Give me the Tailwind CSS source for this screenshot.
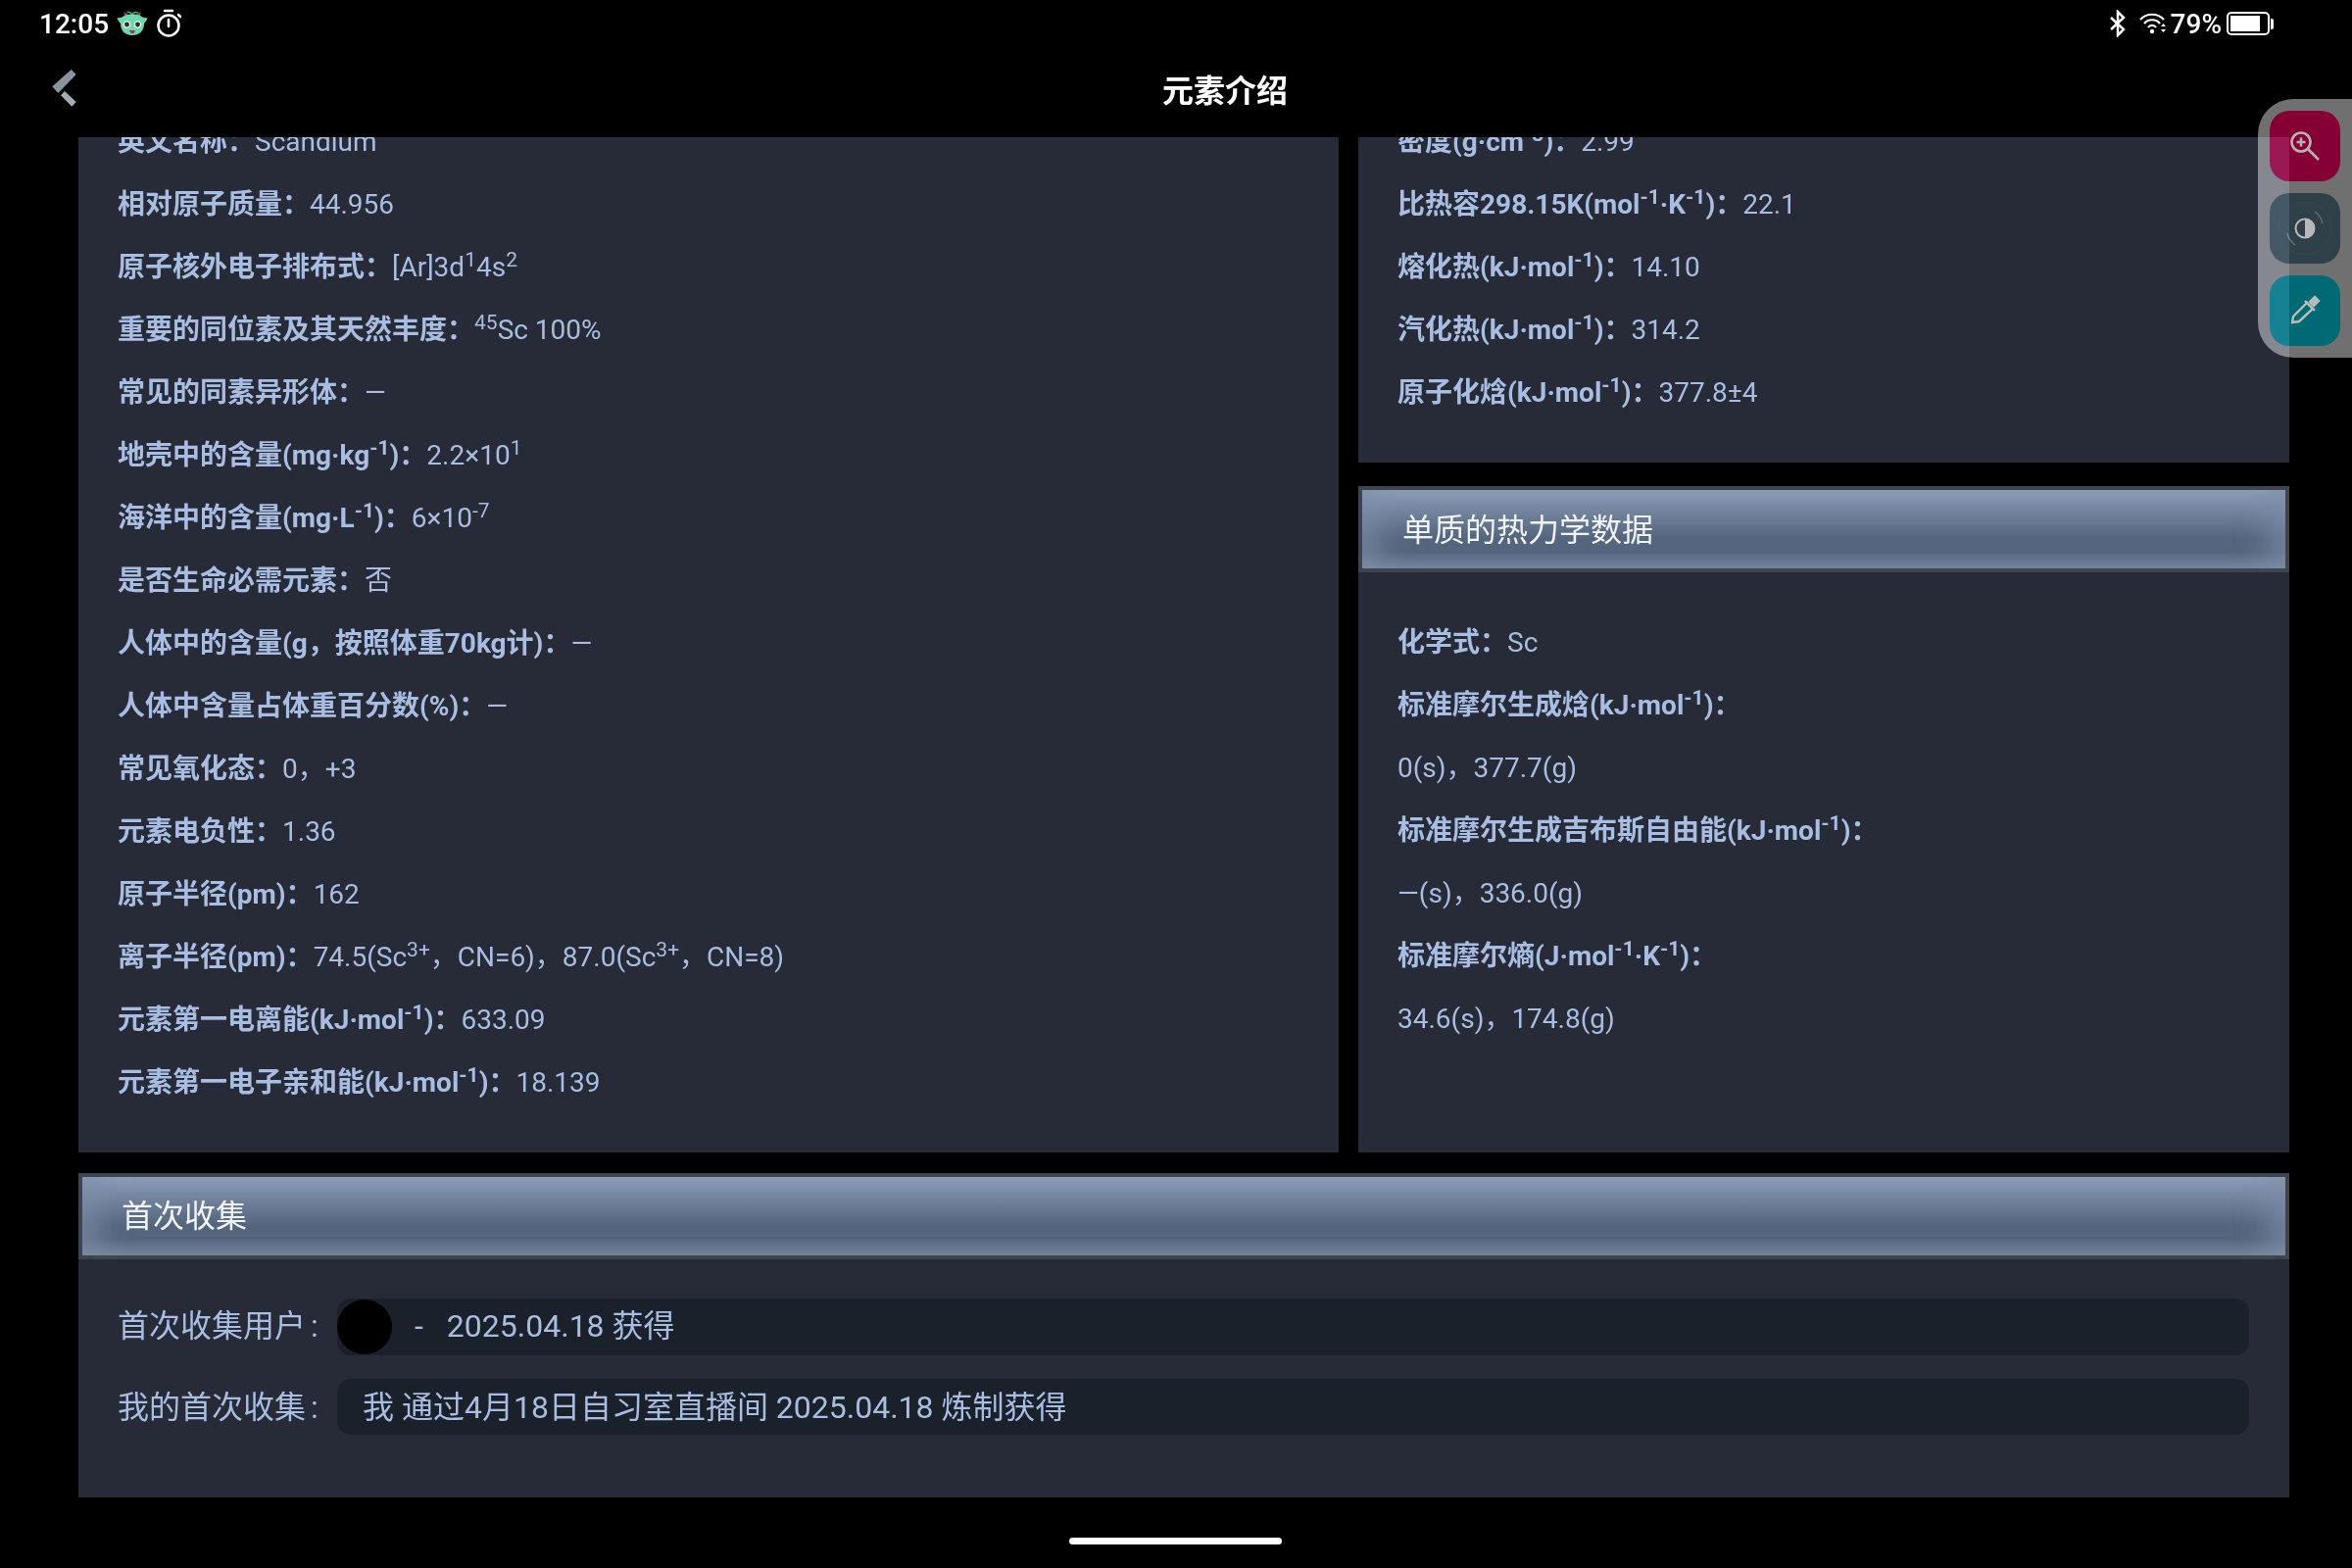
<!DOCTYPE html>
<html lang="zh">

<head>
  <meta charset="UTF-8">
  <title>元素介绍</title>
  <script src="https://cdn.jsdelivr.net/npm/@tailwindcss/browser@4"></script>
</head>

<body class="bg-black">
  <div class="relative w-[2400px] h-[1600px] overflow-hidden bg-black text-[#a9bde2] font-[family-name:Roboto,'Noto_Sans_CJK_SC',sans-serif]">

    <!-- status bar -->
    <div class="h-[48px] pl-[40px] pr-[80px] flex items-center justify-between text-white text-[28px]">
      <div class="flex items-center">
        <span class="font-medium pt-[2px]">12:05</span>
        <svg class="ml-[8px]" width="32" height="26" viewBox="0 0 32 26">
          <path d="M8 6 L7.5 1 L12 4 Z M24 6 L24.5 1 L20 4 Z" fill="#8a5a3a" />
          <path d="M16 4 C14 1 12 1 10.5 1.5 M16 4 C17 1 20 1 22 2" stroke="#4fae6e" stroke-width="1.5" fill="none" />
          <path d="M0.5 7 C4 8 6 6 8 5 C12 3 20 3 24 5 C26 6 28 8 31.5 7 C31 10 29 12 28 13 C28 20 24 25 16 25 C8 25 4 20 4 13 C3 12 1 10 0.5 7 Z" fill="#6fd6ae" />
          <circle cx="10.5" cy="14" r="3.8" fill="#e6f5ea" />
          <circle cx="21.5" cy="14" r="3.8" fill="#e6f5ea" />
          <circle cx="10.5" cy="14" r="2.4" fill="#20302a" />
          <circle cx="21.5" cy="14" r="2.4" fill="#20302a" />
          <path d="M13 20 H19 L17.5 23 H14.5 Z" fill="#b0304a" />
        </svg>
        <svg class="ml-[8px]" width="28" height="30" viewBox="0 0 28 30" fill="none" stroke="#fff" stroke-width="2.5">
          <circle cx="13" cy="17" r="10.5" />
          <path d="M9 2 H17 M13 11 V18 M23 6 L25 8" stroke-linecap="round" />
        </svg>
      </div>
      <div class="flex items-center">
        <svg width="18" height="28" viewBox="0 0 18 28" fill="none" stroke="#fff" stroke-width="2.5">
          <path d="M2 8 L15 20 L9 26 V2 L15 8 L2 20" />
        </svg>
        <svg class="ml-[13px]" width="28" height="24" viewBox="0 0 28 24" fill="none" stroke="#fff" stroke-width="2.2">
          <path d="M1 8 C7 1 19 1 25 8 M5 12 C9 7 17 7 21 12 M9 16 C11 13 15 13 17 16" />
          <circle cx="13" cy="20" r="2.2" fill="#fff" stroke="none" />
          <path d="M22 15 L24.5 12 L27 15 Z M22 18 L24.5 21 L27 18 Z" fill="#fff" stroke="none" />
        </svg>
        <span class="ml-[4px] font-medium pt-[2px]">79%</span>
        <div class="ml-[5px] flex items-center">
          <div class="w-[44px] h-[24px] rounded-[5px] border-2 border-white p-[2px]">
            <div class="w-[30px] h-full bg-white"></div>
          </div>
          <div class="w-[3px] h-[11px] bg-white rounded-r-[2px] ml-[1px]"></div>
        </div>
      </div>
    </div>

    <!-- nav bar -->
    <div class="relative h-[92px] flex items-center justify-center">
      <svg class="absolute left-[50px] top-[20px]" width="32" height="42" viewBox="50 68 32 42">
        <polygon points="72.7,71 77.7,76 59.3,95 53.3,88.3" fill="#8894a0" />
        <polygon points="66,93 77.7,104 73.3,108.7 62,97.3" fill="#a3abb4" />
      </svg>
      <h1 class="text-[32px] font-bold text-white ml-[100px] mb-[3px]">元素介绍</h1>
    </div>

    <!-- scrolled content, clipped at the nav bar -->
    <div class="h-[1036px] mx-[80px] w-[2256px] overflow-hidden flex flex-col justify-end">
      <div class="grid grid-cols-[1286px_950px] gap-x-[20px] shrink-0">
        <div class="bg-[#262b37] pl-[40px] pb-[39px] text-[28px] leading-[64px]">
          <p><b>英文名称：</b>Scandium</p>
          <p><b>相对原子质量：</b>44.956</p>
          <p><b>原子核外电子排布式：</b>[Ar]3d<sup>1</sup>4s<sup>2</sup></p>
          <p><b>重要的同位素及其天然丰度：</b><sup>45</sup>Sc 100%</p>
          <p><b>常见的同素异形体：</b>—</p>
          <p><b>地壳中的含量(mg·kg<sup>-1</sup>)：</b>2.2×10<sup>1</sup></p>
          <p><b>海洋中的含量(mg·L<sup>-1</sup>)：</b>6×10<sup>-7</sup></p>
          <p><b>是否生命必需元素：</b>否</p>
          <p><b>人体中的含量(g，按照体重70kg计)：</b>—</p>
          <p><b>人体中含量占体重百分数(%)：</b>—</p>
          <p><b>常见氧化态：</b>0，+3</p>
          <p><b>元素电负性：</b>1.36</p>
          <p><b>原子半径(pm)：</b>162</p>
          <p><b>离子半径(pm)：</b>74.5(Sc<sup>3+</sup>，CN=6)，87.0(Sc<sup>3+</sup>，CN=8)</p>
          <p><b>元素第一电离能(kJ·mol<sup>-1</sup>)：</b>633.09</p>
          <p><b>元素第一电子亲和能(kJ·mol<sup>-1</sup>)：</b>18.139</p>
        </div>

        <div class="flex flex-col gap-[24px] text-[28px] leading-[64px]">
          <div class="bg-[#262b37] pl-[40px] pb-[39px]">
            <p><b>密度(g·cm<sup>-3</sup>)：</b>2.99</p>
            <p><b>比热容298.15K(mol<sup>-1</sup>·K<sup>-1</sup>)：</b>22.1</p>
            <p><b>熔化热(kJ·mol<sup>-1</sup>)：</b>14.10</p>
            <p><b>汽化热(kJ·mol<sup>-1</sup>)：</b>314.2</p>
            <p><b>原子化焓(kJ·mol<sup>-1</sup>)：</b>377.8±4</p>
          </div>
          <div class="flex-1 bg-[#262b37]">
            <div class="h-[88px] border-4 border-[#3f454e] bg-[linear-gradient(180deg,#8f9fb8_0%,#6d7c96_35%,#56657e_62%,#56657e_78%,#75849c_100%)] shadow-[inset_36px_0_30px_-18px_#7f8fa8aa,inset_-36px_0_30px_-18px_#7f8fa8aa] pl-[41px] pt-[2px] flex items-center text-[32px] text-[#f0f3f8]">单质的热力学数据</div>
            <div class="pl-[40px] pt-[40px]">
              <p><b>化学式：</b>Sc</p>
              <p><b>标准摩尔生成焓(kJ·mol<sup>-1</sup>)：</b></p>
              <p>0(s)，377.7(g)</p>
              <p><b>标准摩尔生成吉布斯自由能(kJ·mol<sup>-1</sup>)：</b></p>
              <p>—(s)，336.0(g)</p>
              <p><b>标准摩尔熵(J·mol<sup>-1</sup>·K<sup>-1</sup>)：</b></p>
              <p>34.6(s)，174.8(g)</p>
            </div>
          </div>
        </div>
      </div>
    </div>

    <!-- first collection card -->
    <div class="mt-[21px] mx-[80px] w-[2256px] h-[331px] bg-[#262b37] text-[32px]">
      <div class="h-[88px] border-4 border-[#3f454e] bg-[linear-gradient(180deg,#8f9fb8_0%,#6d7c96_35%,#56657e_62%,#56657e_78%,#75849c_100%)] shadow-[inset_36px_0_30px_-18px_#7f8fa8aa,inset_-36px_0_30px_-18px_#7f8fa8aa] pl-[40px] flex items-center text-[#f0f3f8]">首次收集</div>
      <div class="pl-[40px] pr-[41px] pt-[40px] flex flex-col gap-[24px]">
        <div class="flex items-center">
          <span class="w-[224px] shrink-0 pb-[3px]">首次收集用户<span class="ml-[5px]">:</span></span>
          <div class="flex-1 h-[58px] rounded-[14px] bg-[#1b212b] flex items-center">
            <div class="w-[56px] h-[56px] rounded-full bg-black shrink-0"></div>
            <span class="ml-[23px] pb-[3px]">-</span>
            <span class="ml-[24px] pb-[3px]">2025.04.18 获得</span>
          </div>
        </div>
        <div class="flex items-center">
          <span class="w-[224px] shrink-0">我的首次收集<span class="ml-[5px]">:</span></span>
          <div class="flex-1 h-[57px] rounded-[14px] bg-[#1b212b] flex items-center pl-[26px]">我 通过4月18日自习室直播间 2025.04.18 炼制获得</div>
        </div>
      </div>
    </div>

    <!-- home indicator -->
    <div class="absolute left-[1091px] top-[1569px] w-[217px] h-[7px] rounded-full bg-white"></div>

    <!-- floating tool panel -->
    <div class="absolute left-[2304px] top-[101px] w-[96px] h-[264px] rounded-l-[36px] overflow-hidden bg-[#707070] pl-[12px] pt-[12px] flex flex-col gap-[12px]">
      <div class="w-[72px] h-[72px] rounded-[20px] bg-[#850035] flex items-center justify-center">
        <svg width="32" height="32" viewBox="0 0 32 32" fill="none" stroke="#b8b2b4" stroke-width="2.6">
          <circle cx="12" cy="12" r="9.5" />
          <path d="M12 7.5 V16.5 M7.5 12 H16.5 M19 19 L30 30" />
        </svg>
      </div>
      <div class="w-[72px] h-[72px] rounded-[20px] bg-[#2f4048] flex items-center justify-center">
        <svg width="60" height="60" viewBox="0 0 60 60" fill="none">
          <circle cx="30" cy="30" r="27" stroke="#37464e" stroke-width="1" />
          <circle cx="30" cy="30" r="9.5" stroke="#b8b8b8" stroke-width="2" />
          <path d="M30 20 A10 10 0 0 1 30 40 Z" fill="#b8b8b8" />
          <path d="M40 13 A20 20 0 0 1 48 25 M20 47 A20 20 0 0 1 12 35" stroke="#5f6f77" stroke-width="1.5" />
        </svg>
      </div>
      <div class="w-[72px] h-[72px] rounded-[20px] bg-[#006974] flex items-center justify-center">
        <svg width="72" height="72" viewBox="0 0 72 72" fill="none" stroke="#b8bcbc" stroke-width="2.4">
          <path d="M23 48 L24 42 L38 28 L44 34 L30 47 Z" />
          <path d="M36 26 L46 36" />
          <path d="M41 27 L46 22 L50 26 L45 31 Z" fill="#b8bcbc" />
        </svg>
      </div>
      <div class="absolute left-0 top-[39px] w-[32px] h-[225px] bg-[#15181f] mix-blend-plus-lighter"></div>
    </div>
  </div>
</body>

</html>
